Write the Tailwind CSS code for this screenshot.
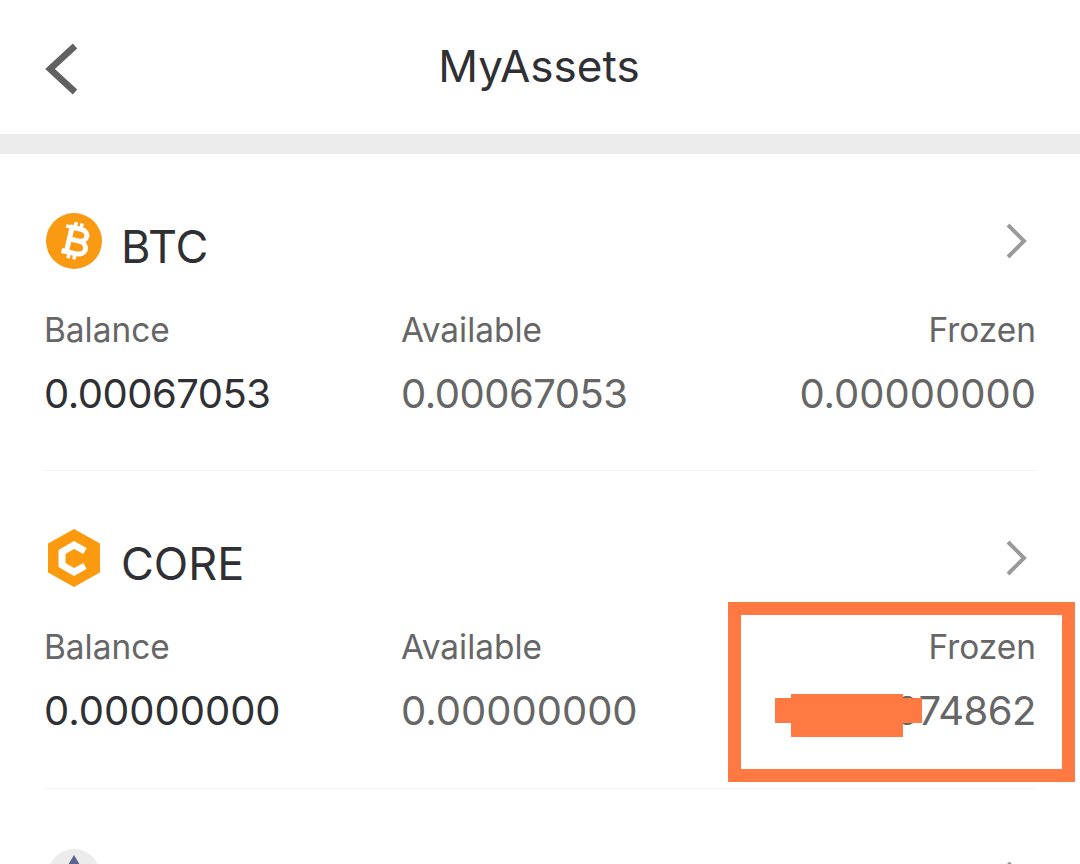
<!DOCTYPE html>
<html><head><meta charset="utf-8">
<script src="https://cdn.jsdelivr.net/npm/@tailwindcss/browser@4"></script></head>
<body class="bg-white">
<div class="relative w-[1080px] h-[864px] overflow-hidden bg-white font-['Inter',sans-serif] text-[#2f3033]">
  <header class="relative h-[134px] flex items-center justify-center">
    <svg class="absolute left-[44px] top-[42px]" width="36" height="54" viewBox="0 0 36 54"><path d="M31 4 L6 27 L31 50" fill="none" stroke="#616161" stroke-width="6.5"/></svg>
    <h1 class="text-[44px] leading-none -mt-[2px] -ml-[2px]">MyAssets</h1>
  </header>
  <div class="h-[20px] bg-[#ebebeb]"></div>
  <main class="px-[44px]">
    <section class="h-[317px] pt-[59px] border-b border-[#f1f1f1]">
      <div class="flex items-center h-[60px]">
        <svg class="-mt-[4px] ml-[1px]" width="58" height="58" viewBox="0 0 58 58"><circle cx="29" cy="29" r="28" fill="#fa9a13"/><g transform="rotate(13 29 29)" fill="none" stroke="#fff"><path d="M22 16 H33 C43 16 43 28 33 28 H22 M33 28 C45 28 45 41 33 41 H19 M24 16 V41" stroke-width="5"/><path d="M27 10 V16 M33 10 V16 M27 41 V47 M33 41 V47 M18 16 H24" stroke-width="3.5"/></g></svg>
        <span class="ml-[18px] text-[45px] leading-none mt-[6px]">BTC</span>
        <svg class="ml-auto mr-[6px] -mt-[4px]" width="26" height="38" viewBox="0 0 26 38"><path d="M4 3 L20 19 L4 35" fill="none" stroke="#9a9a9a" stroke-width="4"/></svg>
      </div>
      <div class="grid grid-cols-[357px_1fr_auto] mt-[37px]">
        <div><p class="text-[33.4px] leading-[40px] text-[#666]">Balance</p><p class="mt-[22px] text-[40px] leading-[44px] tracking-[-0.5px]">0.00067053</p></div>
        <div><p class="text-[33.4px] leading-[40px] text-[#666]">Available</p><p class="mt-[22px] text-[40px] leading-[44px] text-[#666] tracking-[-0.5px]">0.00067053</p></div>
        <div class="text-right"><p class="text-[33.4px] leading-[40px] text-[#666]">Frozen</p><p class="mt-[22px] text-[40px] leading-[44px] text-[#666]">0.00000000</p></div>
      </div>
    </section>
    <section class="h-[318px] pt-[59px] border-b border-[#f1f1f1]">
      <div class="flex items-center h-[60px]">
        <svg class="-mt-[4px] ml-[1px]" width="58" height="58" viewBox="0 0 58 58"><path d="M29 1 L54 15 L54 43 L29 57 L4 43 L4 15 Z" fill="#fb9a0e" stroke="#fb9a0e" stroke-width="2" stroke-linejoin="round"/><path d="M40 22 L29 16 L17 23 L17 36 L29 43 L40 37" fill="none" stroke="#fff" stroke-width="7"/></svg>
        <span class="ml-[18px] text-[45px] leading-none mt-[6px]">CORE</span>
        <svg class="ml-auto mr-[6px] -mt-[4px]" width="26" height="38" viewBox="0 0 26 38"><path d="M4 3 L20 19 L4 35" fill="none" stroke="#9a9a9a" stroke-width="4"/></svg>
      </div>
      <div class="grid grid-cols-[357px_1fr_auto] mt-[37px]">
        <div><p class="text-[33.4px] leading-[40px] text-[#666]">Balance</p><p class="mt-[22px] text-[40px] leading-[44px]">0.00000000</p></div>
        <div><p class="text-[33.4px] leading-[40px] text-[#666]">Available</p><p class="mt-[22px] text-[40px] leading-[44px] text-[#666]">0.00000000</p></div>
        <div class="text-right"><p class="text-[33.4px] leading-[40px] text-[#666]">Frozen</p><p class="mt-[22px] text-[40px] leading-[44px] text-[#666] tracking-[-0.5px]">0.00674862</p></div>
      </div>
    </section>
    <section class="pt-[58px] flex">
      <svg class="ml-[2px]" width="56" height="56" viewBox="0 0 56 56"><circle cx="28" cy="28" r="26" fill="#ececec"/><path d="M28 8 L16 28 L28 36 L40 28 Z" fill="#5b6390"/></svg>
      <svg class="ml-auto mr-[6px] mt-[13px]" width="26" height="38" viewBox="0 0 26 38"><path d="M4 3 L20 19 L4 35" fill="none" stroke="#9a9a9a" stroke-width="4"/></svg>
    </section>
  </main>
  <div class="absolute left-[728px] top-[602px] w-[347px] h-[180px] border-[13px] border-[#ff7a43]"></div>
  <div class="absolute left-[775px] top-[698px] w-[147px] h-[25px] bg-[#ff7a43]"></div>
  <div class="absolute left-[791px] top-[694px] w-[112px] h-[43px] bg-[#ff7a43]"></div>
</div>
</body></html>
